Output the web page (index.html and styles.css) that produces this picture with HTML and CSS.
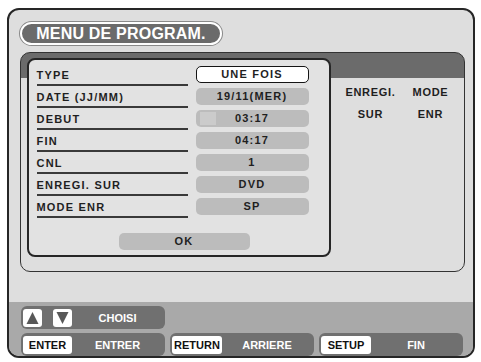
FILE: index.html
```html
<!DOCTYPE html>
<html>
<head>
<meta charset="utf-8">
<link rel="stylesheet" href="styles.css">
</head>
<body>
<div class="frame">
  <div class="title">MENU DE PROGRAM.</div>
  <div class="panel">
    <div class="popup">
      <div class="rows">
        <div class="label">TYPE</div><div class="value sel">UNE FOIS</div>
        <div class="label">DATE (JJ/MM)</div><div class="value">19/11(MER)</div>
        <div class="label">DEBUT</div><div class="value cursor"><span class="mark"></span>03:17</div>
        <div class="label">FIN</div><div class="value">04:17</div>
        <div class="label">CNL</div><div class="value">1</div>
        <div class="label">ENREGI. SUR</div><div class="value">DVD</div>
        <div class="label">MODE ENR</div><div class="value">SP</div>
      </div>
      <div class="ok">OK</div>
    </div>
    <div class="side">
      <span>ENREGI.</span><span>MODE</span>
      <span>SUR</span><span>ENR</span>
    </div>
  </div>
  <div class="footer">
    <div class="frow">
      <div class="seg">
        <span class="key arrow"><svg width="19" height="18" viewBox="0 0 19 18"><polygon points="3.5,15 15.5,15 9.5,3" fill="#585858"/></svg></span>
        <span class="key arrow second"><svg width="19" height="18" viewBox="0 0 19 18"><polygon points="3.5,3 15.5,3 9.5,15" fill="#585858"/></svg></span>
        <span class="txt">CHOISI</span>
      </div>
    </div>
    <div class="frow">
      <div class="seg"><span class="key k1">ENTER</span><span class="txt">ENTRER</span></div>
      <div class="seg"><span class="key k2">RETURN</span><span class="txt">ARRIERE</span></div>
      <div class="seg"><span class="key k2">SETUP</span><span class="txt">FIN</span></div>
    </div>
  </div>
</div>
</body>
</html>
```
FILE: styles.css
```css
html, body {
  margin: 0;
  padding: 0;
  background: #ffffff;
}
body {
  width: 481px;
  height: 362px;
  overflow: hidden;
  font-family: "Liberation Sans", Arial, sans-serif;
  font-weight: bold;
}
.frame {
  box-sizing: border-box;
  margin: 8px 0 0 7px;
  width: 468px;
  height: 350px;
  border: 2px solid #262626;
  border-radius: 12px;
  background: #dedede;
  overflow: hidden;
  display: flex;
  flex-direction: column;
}
.title {
  box-sizing: border-box;
  margin: 12px 0 0 11px;
  width: 202px;
  height: 23px;
  border: 2px solid #ffffff;
  border-radius: 12px;
  box-shadow: 0 0 0 1px #8a8a8a;
  background: #6b6b6b;
  color: #ffffff;
  font-size: 16px;
  line-height: 19px;
  letter-spacing: 0.2px;
  text-align: center;
}
.panel {
  box-sizing: border-box;
  margin: 7px 0 0 11px;
  width: 445px;
  height: 220px;
  border: 1.5px solid #333333;
  border-radius: 10px;
  padding: 4.5px 0 0 5.5px;
  background: linear-gradient(#6b6b6b 0 24.5px, #dedede 24.5px);
  display: flex;
  align-items: flex-start;
}
.popup {
  border: 2px solid #262626;
  border-radius: 8px;
  background: #e2e2e2;
  padding: 4px 20px 5px 8px;
}
.rows {
  display: grid;
  grid-template-columns: 151px 113px;
  column-gap: 8px;
  color: #1f1f1f;
  font-size: 11px;
  letter-spacing: 1.2px;
}
.label {
  box-sizing: border-box;
  height: 22px;
  padding-top: 3px;
  line-height: 17px;
  border-bottom: 2px solid #3a3a3a;
  white-space: nowrap;
}
.value {
  box-sizing: border-box;
  position: relative;
  margin-top: 2px;
  height: 17px;
  line-height: 17px;
  border-radius: 5px;
  background: #bcbcbc;
  text-align: center;
}
.value.sel {
  background: #ffffff;
  border: 1.5px solid #151515;
  line-height: 14px;
}
.mark {
  position: absolute;
  left: 4px;
  top: 2px;
  width: 16px;
  height: 13px;
  background: #cbcbcb;
}
.ok {
  margin: 15px 0 0 82px;
  width: 131px;
  height: 17px;
  line-height: 17px;
  border-radius: 5px;
  background: #bcbcbc;
  color: #1f1f1f;
  font-size: 11px;
  letter-spacing: 1.2px;
  text-align: center;
}
.side {
  margin-left: 10px;
  padding-top: 27.5px;
  display: grid;
  grid-template-columns: 60px 60px;
  row-gap: 7.5px;
  justify-items: center;
  color: #1f1f1f;
  font-size: 11px;
  line-height: 14px;
  letter-spacing: 0.7px;
}
.footer {
  margin-top: auto;
  background: #a9a9a9;
  padding: 4px 0 0 12px;
  display: flex;
  flex-direction: column;
  gap: 4px;
}
.frow {
  display: flex;
  gap: 5px;
}
.seg {
  box-sizing: border-box;
  width: 144px;
  height: 23px;
  padding: 0 2px;
  border-radius: 6px;
  background: #707070;
  display: flex;
  align-items: center;
  font-size: 11px;
}
.key {
  box-sizing: border-box;
  height: 18px;
  line-height: 18px;
  border-radius: 3px;
  background: #ffffff;
  color: #111111;
  text-align: center;
}
.key.arrow {
  width: 19px;
  display: flex;
}
.key.second {
  margin-left: 11px;
}
.key.k1 {
  width: 49px;
}
.key.k2 {
  width: 50px;
}
.txt {
  flex: 1;
  text-align: center;
  color: #ffffff;
}
```
